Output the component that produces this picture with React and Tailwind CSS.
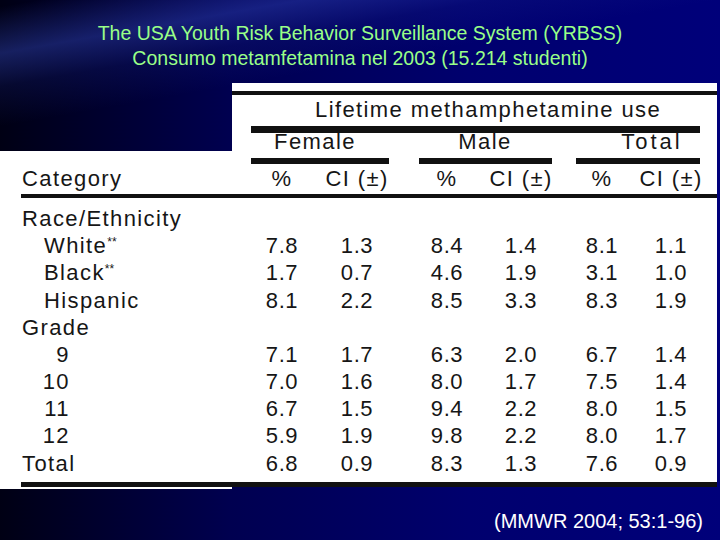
const rows = [
  { label: "Race/Ethnicity", kind: "group" },
  { label: "White", kind: "sub", mark: true, v: ["7.8", "1.3", "8.4", "1.4", "8.1", "1.1"] },
  { label: "Black", kind: "sub", mark: true, v: ["1.7", "0.7", "4.6", "1.9", "3.1", "1.0"] },
  { label: "Hispanic", kind: "sub", v: ["8.1", "2.2", "8.5", "3.3", "8.3", "1.9"] },
  { label: "Grade", kind: "group" },
  { label: "9", kind: "num", v: ["7.1", "1.7", "6.3", "2.0", "6.7", "1.4"] },
  { label: "10", kind: "num", v: ["7.0", "1.6", "8.0", "1.7", "7.5", "1.4"] },
  { label: "11", kind: "num", v: ["6.7", "1.5", "9.4", "2.2", "8.0", "1.5"] },
  { label: "12", kind: "num", v: ["5.9", "1.9", "9.8", "2.2", "8.0", "1.7"] },
  { label: "Total", kind: "group", v: ["6.8", "0.9", "8.3", "1.3", "7.6", "0.9"] },
];

// offsets of the six value columns (each 60px wide)
const cols = ["ml-[20px]", "ml-[15px]", "ml-[30px]", "ml-[14px]", "ml-[21px]", "ml-[9px]"];
const heads = ["%", "CI (±)", "%", "CI (±)", "%", "CI (±)"];

const Label = ({ row }) => {
  if (row.kind === "sub")
    return (
      <span className="pl-[22px]">
        {row.label}
        {row.mark && <span className="text-[12px] tracking-normal relative -top-[7px]">**</span>}
      </span>
    );
  if (row.kind === "num") return <span className="inline-block w-[48px] text-right">{row.label}</span>;
  return <span>{row.label}</span>;
};

export default function App() {
  return (
    <div className="w-[720px] h-[540px] overflow-hidden flex flex-col font-['Liberation_Sans',Arial,sans-serif] bg-[linear-gradient(170deg,transparent_1%,rgba(50,70,185,0.45)_8%,rgba(30,45,150,0.2)_13%,transparent_19%),linear-gradient(to_right,#000014,#000050_32%,#00006e_65%,#00007a)]">
      {/* Title */}
      <div className="pt-[21px] text-center text-[19.5px] leading-[25px] text-[#99ff88]">
        <p>The USA Youth Risk Behavior Surveillance System (YRBSS)</p>
        <p>Consumo metamfetamina nel 2003 (15.214 studenti)</p>
      </div>

      {/* Table */}
      <div className="mt-[11.5px] w-[717px] text-[22px] text-[#161616] tracking-[1.4px]">
        {/* top block, right side only */}
        <div className="flex">
          <div className="w-[232px]" />
          <div className="w-[485px] bg-white pt-[8px]">
            <div className="h-[4px] bg-[#111]" />
            <div className="h-[30px] leading-[30px] pl-[83px]">Lifetime methamphetamine use</div>
            <div className="mt-[1px] ml-[19px] w-[449px] h-[7px] bg-[#111]" />
            <div className="flex h-[18px] leading-[18px]">
              <div className="ml-[33px] w-[100px] text-center">Female</div>
              <div className="ml-[70px] w-[100px] text-center">Male</div>
              <div className="ml-[67px] w-[100px] text-center tracking-[3px]">Total</div>
            </div>
          </div>
        </div>

        <div className="bg-white">
          <div className="pt-[7px] flex h-[13px]">
            <div className="ml-[251px] w-[138px] h-[6px] bg-[#111]" />
            <div className="ml-[30px] w-[133px] h-[6px] bg-[#111]" />
            <div className="ml-[24px] w-[124px] h-[6px] bg-[#111]" />
          </div>
          <div className="flex h-[30px] items-center">
            <div className="w-[232px] pl-[22px]">Category</div>
            {heads.map((h, i) => (
              <div key={i} className={`${cols[i]} w-[60px] flex justify-center whitespace-nowrap`}>
                {h}
              </div>
            ))}
          </div>
          <div className="ml-[21px] h-[4px] bg-[#111]" />
          <div className="pt-[7.4px]">
            {rows.map((r) => (
              <div key={r.label} className="flex h-[27.2px] items-center">
                <div className="w-[232px] pl-[22px] whitespace-nowrap">
                  <Label row={r} />
                </div>
                {r.v &&
                  r.v.map((n, i) => (
                    <div key={i} className={`${cols[i]} w-[60px] flex justify-center tracking-[0.6px]`}>
                      {n}
                    </div>
                  ))}
              </div>
            ))}
          </div>
          <div className="pt-[5.4px]" />
          <div className="ml-[21px] h-[5px] bg-[#111]" />
        </div>
        <div className="w-[232px] h-[2px] bg-white" />
      </div>

      {/* Source */}
      <div className="mt-[20px] pr-[17px] text-right text-[20px] leading-[24px] text-white">
        (MMWR 2004; 53:1-96)
      </div>
    </div>
  );
}
